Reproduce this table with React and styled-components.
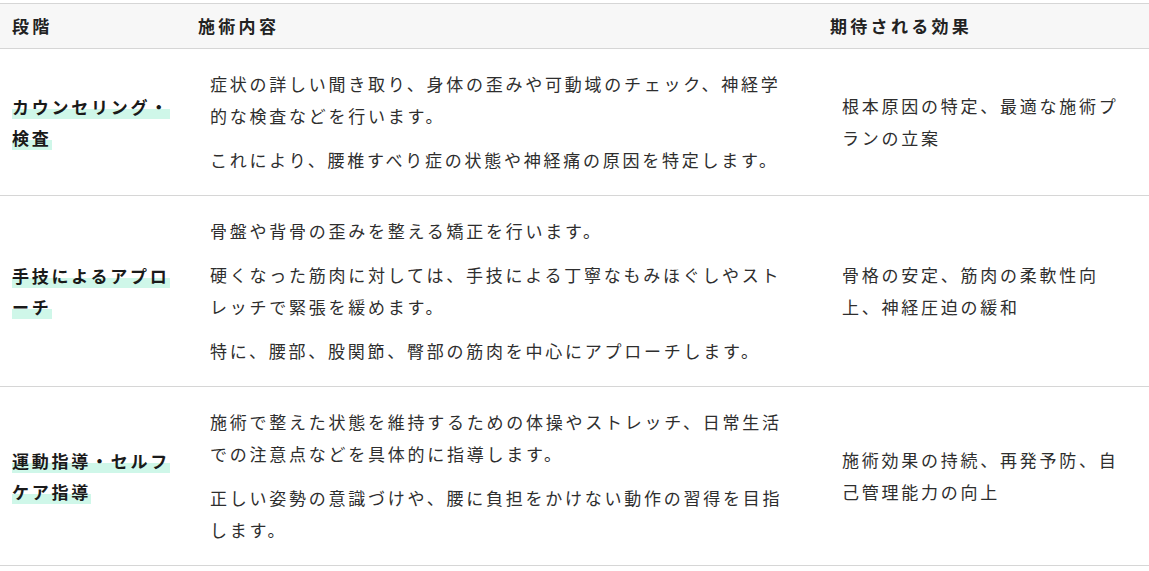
import React from "react";
import styled, { createGlobalStyle } from "styled-components";

const GlobalStyle = createGlobalStyle`
  body {
    margin: 0;
    background: #ffffff;
    font-family: "Noto Sans CJK JP", "Noto Sans", sans-serif;
  }
`;

const Page = styled.div`
  padding-top: 3px;
`;

const Table = styled.table`
  width: 1149px;
  border-collapse: collapse;
  table-layout: fixed;
  color: #2e2e2e;
  font-size: 17px;
  letter-spacing: 2.75px;
  border-top: 1px solid #d6d6d6;
`;

const HeadRow = styled.tr`
  background: #f7f7f7;
  border-bottom: 1px solid #d6d6d6;
`;

const HeadCell = styled.th`
  text-align: left;
  font-weight: 700;
  color: #222222;
  padding: 11px 12px;
  line-height: 22px;
  letter-spacing: 3.3px;
`;

const Row = styled.tr`
  border-bottom: 1px solid #d6d6d6;
`;

const StageCell = styled.th`
  text-align: left;
  font-weight: 700;
  color: #1a1a1a;
  padding: 19px 12px;
  line-height: 31px;
  vertical-align: middle;
`;

const Marker = styled.span`
  background: linear-gradient(transparent 60%, #cff7e9 60%);
`;

const Cell = styled.td`
  padding: 19px 24px;
  vertical-align: middle;
  line-height: 32px;
`;

const Para = styled.p`
  margin: 0;
  & + & {
    margin-top: 12px;
  }
`;

const rows = [
  {
    stage: "カウンセリング・検査",
    content: [
      "症状の詳しい聞き取り、身体の歪みや可動域のチェック、神経学的な検査などを行います。",
      "これにより、腰椎すべり症の状態や神経痛の原因を特定します。",
    ],
    effect: "根本原因の特定、最適な施術プランの立案",
  },
  {
    stage: "手技によるアプローチ",
    content: [
      "骨盤や背骨の歪みを整える矯正を行います。",
      "硬くなった筋肉に対しては、手技による丁寧なもみほぐしやストレッチで緊張を緩めます。",
      "特に、腰部、股関節、臀部の筋肉を中心にアプローチします。",
    ],
    effect: "骨格の安定、筋肉の柔軟性向上、神経圧迫の緩和",
  },
  {
    stage: "運動指導・セルフケア指導",
    content: [
      "施術で整えた状態を維持するための体操やストレッチ、日常生活での注意点などを具体的に指導します。",
      "正しい姿勢の意識づけや、腰に負担をかけない動作の習得を目指します。",
    ],
    effect: "施術効果の持続、再発予防、自己管理能力の向上",
  },
];

const App = () => (
  <Page>
    <GlobalStyle />
    <Table>
      <colgroup>
        <col style={{ width: 186 }} />
        <col style={{ width: 632 }} />
        <col style={{ width: 331 }} />
      </colgroup>
      <thead>
        <HeadRow>
          <HeadCell>段階</HeadCell>
          <HeadCell>施術内容</HeadCell>
          <HeadCell>期待される効果</HeadCell>
        </HeadRow>
      </thead>
      <tbody>
        {rows.map((r) => (
          <Row key={r.stage}>
            <StageCell scope="row">
              <Marker>{r.stage}</Marker>
            </StageCell>
            <Cell>
              {r.content.map((c) => (
                <Para key={c}>{c}</Para>
              ))}
            </Cell>
            <Cell>{r.effect}</Cell>
          </Row>
        ))}
      </tbody>
    </Table>
  </Page>
);

export default App;
